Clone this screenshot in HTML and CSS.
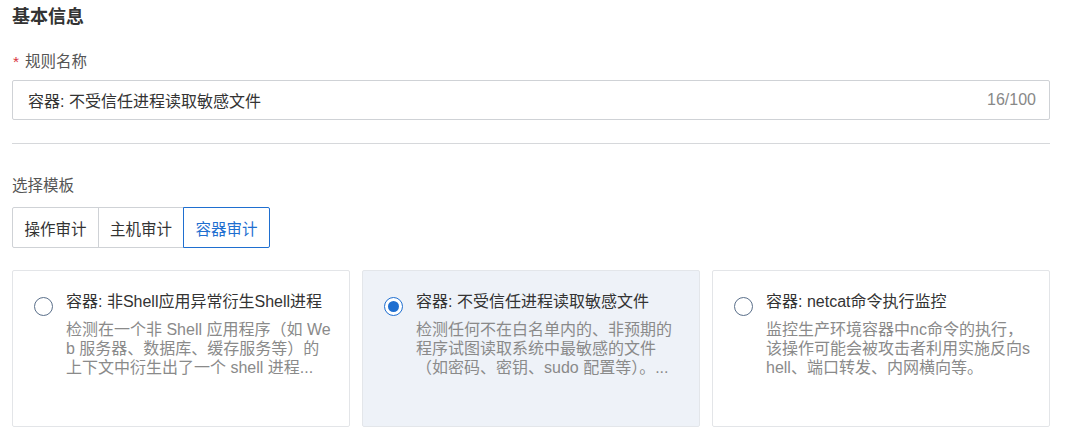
FILE: index.html
```html
<!DOCTYPE html>
<html lang="zh">
<head>
<meta charset="utf-8">
<link rel="stylesheet" href="styles.css">
</head>
<body>
<div class="page">
  <h2 class="section-title">基本信息</h2>
  <div class="field">
    <div class="label"><span class="req">*</span>规则名称</div>
    <div class="input">
      <span class="input-text">容器: 不受信任进程读取敏感文件</span>
      <span class="counter">16/100</span>
    </div>
  </div>
  <div class="divider"></div>
  <div class="field field-template">
    <div class="label">选择模板</div>
    <div class="tabs">
      <div class="tab">操作审计</div>
      <div class="tab">主机审计</div>
      <div class="tab active">容器审计</div>
    </div>
  </div>
  <div class="cards">
    <div class="card">
      <span class="radio"></span>
      <div class="card-body">
        <div class="card-title">容器: 非Shell应用异常衍生Shell进程</div>
        <div class="card-desc">检测在一个非 Shell 应用程序（如 We<br>b 服务器、数据库、缓存服务等）的<br>上下文中衍生出了一个 shell 进程...</div>
      </div>
    </div>
    <div class="card selected">
      <span class="radio checked"></span>
      <div class="card-body">
        <div class="card-title">容器: 不受信任进程读取敏感文件</div>
        <div class="card-desc">检测任何不在白名单内的、非预期的<br>程序试图读取系统中最敏感的文件<br>（如密码、密钥、sudo 配置等）。...</div>
      </div>
    </div>
    <div class="card">
      <span class="radio"></span>
      <div class="card-body">
        <div class="card-title">容器: netcat命令执行监控</div>
        <div class="card-desc">监控生产环境容器中nc命令的执行，<br>该操作可能会被攻击者利用实施反向s<br>hell、端口转发、内网横向等。</div>
      </div>
    </div>
  </div>
</div>
</body>
</html>
```

FILE: styles.css
```css
* { box-sizing: border-box; }
html, body {
  margin: 0;
  padding: 0;
  background: #ffffff;
}
body {
  font-family: "Liberation Sans", "Noto Sans CJK SC", sans-serif;
  color: #333;
  font-size: 15.75px;
}
.page {
  width: 1062px;
  padding: 4px 12px 0 12px;
}
.section-title {
  margin: 0;
  font-size: 18px;
  line-height: 26px;
  font-weight: 700;
  color: #333;
}
.field {
  display: flex;
  flex-direction: column;
}
.label {
  margin-top: 21px;
  line-height: 22px;
  color: #555;
  font-size: 15.5px;
}
.req {
  color: #d9363e;
  margin-right: 6px;
  margin-left: 1px;
}
.input {
  margin-top: 7px;
  height: 40px;
  border: 1px solid #cfd2d6;
  border-radius: 2px;
  display: flex;
  align-items: center;
  justify-content: space-between;
  padding: 0 13px 0 15px;
  background: #fff;
}
.input-text { color: #333; font-size: 16px; }
.counter { color: #888; font-size: 16px; }
.divider {
  margin-top: 23px;
  height: 1px;
  background: #d6d8db;
}
.field-template .label { margin-top: 31px; }
.tabs {
  margin-top: 10px;
  display: flex;
}
.tab {
  height: 41px;
  width: 87px;
  display: flex;
  align-items: center;
  justify-content: center;
  border: 1px solid #cfd2d6;
  color: #333;
  background: #fff;
  font-size: 15.5px;
}
.tab + .tab { margin-left: -1px; }
.tab:first-child { border-radius: 2px 0 0 2px; }
.tab:nth-child(2) { width: 86px; }
.tab:last-child { border-radius: 0 2px 2px 0; }
.tab.active {
  border-color: #1f6fd0;
  color: #1f6fd0;
  position: relative;
  z-index: 1;
}
.cards {
  margin-top: 22px;
  display: flex;
  gap: 12px;
}
.card {
  flex: 1;
  height: 157px;
  border: 1px solid #e3e5e8;
  border-radius: 2px;
  background: #fff;
  display: flex;
  align-items: flex-start;
  padding: 21px 16px 0 21px;
}
.card.selected {
  background: #eef2f8;
  border-color: #e3e6ea;
}
.radio {
  flex: none;
  width: 19px;
  height: 19px;
  border: 1.5px solid #5a6f8a;
  border-radius: 50%;
  margin-top: 5px;
  margin-right: 13px;
  background: #fff;
  display: flex;
  align-items: center;
  justify-content: center;
}
.radio.checked {
  border: 1.5px solid #1f6fd0;
}
.radio.checked::after {
  content: "";
  width: 11px;
  height: 11px;
  border-radius: 50%;
  background: #1f6fd0;
}
.card-body {
  min-width: 0;
}
.card-title {
  font-size: 16px;
  line-height: 20px;
  color: #333;
}
.card-desc {
  margin-top: 8px;
  font-size: 16px;
  line-height: 19px;
  color: #8a8a8a;
  white-space: nowrap;
}
```
